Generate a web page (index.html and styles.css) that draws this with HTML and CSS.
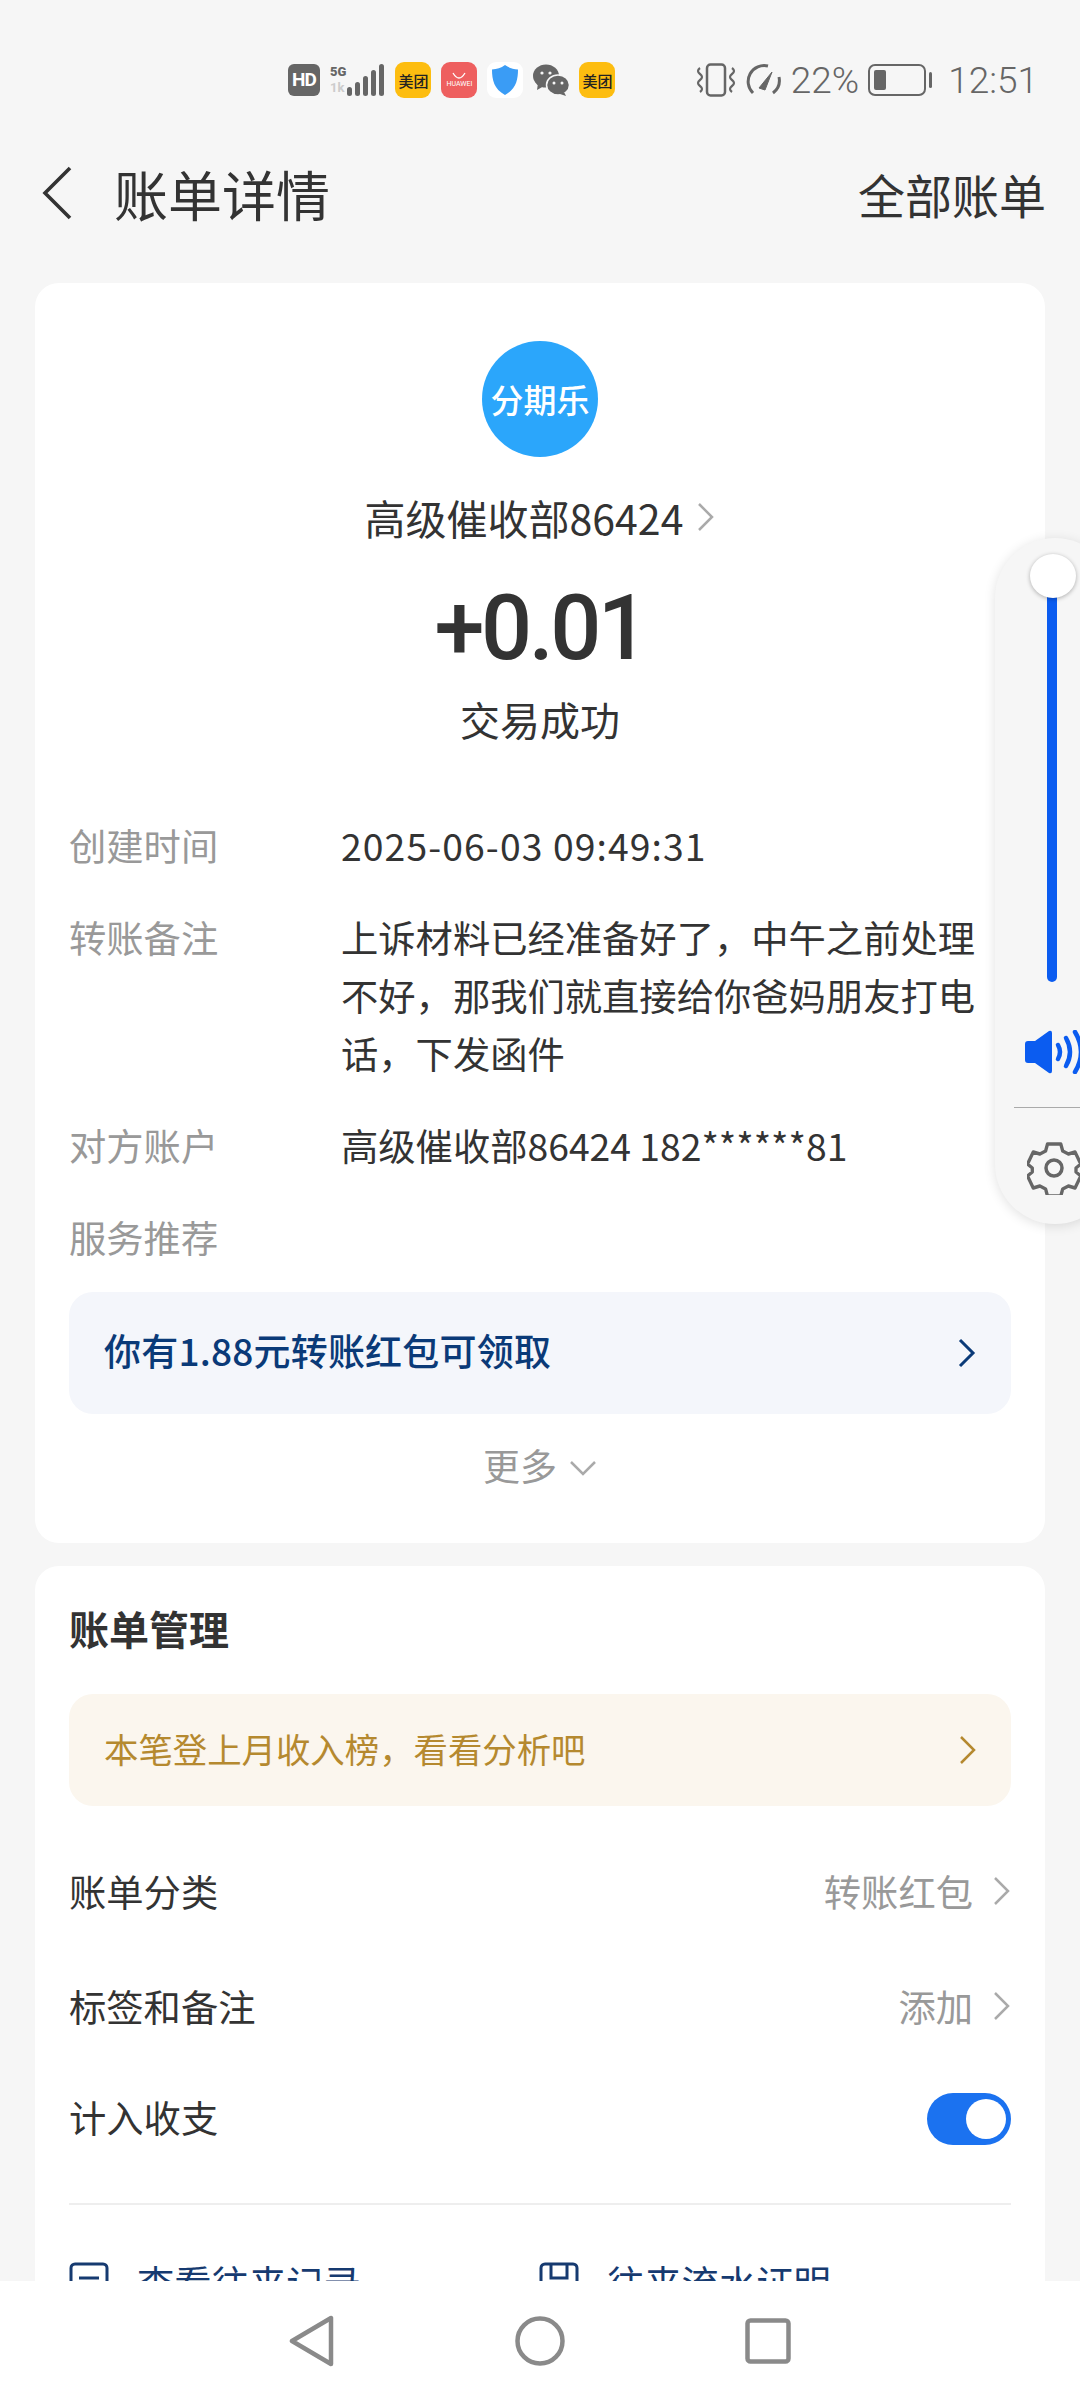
FILE: index.html
```html
<!DOCTYPE html>
<html lang="zh-CN">
<head>
  <meta charset="UTF-8" />
  <title>账单详情</title>
  <link rel="stylesheet" href="styles.css">
</head>
<body>
<div class="phone">
  <div class="statusbar">
    <div class="notify">
      <span class="hd">HD</span>
      <span class="net">
        <span class="net-label"><b>5G</b><i>1k</i></span>
        <svg width="38" height="32" viewBox="0 0 38 32"><g fill="#666"><rect x="0" y="23" width="5" height="9" rx="2.5"/><rect x="8" y="18" width="5" height="14" rx="2.5"/><rect x="16" y="12" width="5" height="20" rx="2.5"/><rect x="24" y="6" width="5" height="26" rx="2.5"/><rect x="32" y="0" width="5" height="32" rx="2.5"/></g></svg>
      </span>
      <span class="app meituan">美团</span>
      <span class="app huawei"><svg width="14" height="8" viewBox="0 0 14 8"><path d="M1 1q6 10 12 0" fill="none" stroke="#fff" stroke-width="1.3"/></svg><em>HUAWEI</em></span>
      <span class="app shield"><svg width="26" height="30" viewBox="0 0 26 30"><path d="M13 0C9 3 5 4 0 4.500C0 15 2 24 13 30C24 24 26 15 26 4.500C21 4 17 3 13 0Z" fill="#3a9cf5"/></svg></span>
      <svg class="wechat" width="36" height="32" viewBox="0 0 36 32"><ellipse cx="13" cy="12" rx="13" ry="11.500" fill="#666"/><path d="M5 19l-1 7 7-4z" fill="#666"/><ellipse cx="25" cy="21" rx="11.500" ry="10" fill="#666" stroke="#f6f6f6" stroke-width="1.500"/><path d="M31 28l2 4-6-2z" fill="#666"/><g fill="#f6f6f6"><circle cx="9" cy="9" r="1.600"/><circle cx="17" cy="9" r="1.600"/><circle cx="21" cy="19" r="1.500"/><circle cx="29" cy="19" r="1.500"/></g></svg>
      <span class="app meituan">美团</span>
    </div>
    <div class="system">
      <svg width="42" height="34" viewBox="0 0 42 34" fill="none" stroke="#666" stroke-width="2.500"><rect x="12" y="1.500" width="18" height="31" rx="3.500"/><path d="M4 5q-4 3 0 6t0 6 0 6 0 6" stroke-width="2.200" transform="translate(1 0)"/><path d="M37 5q4 3 0 6t0 6 0 6 0 6" stroke-width="2.200"/></svg>
      <svg width="38" height="34" viewBox="0 0 38 34" fill="none" stroke="#666" stroke-width="3"><path d="M9 30A16 16 0 0 1 24 3"/><path d="M29 30A16 16 0 0 0 35 14"/><path d="M15 25L28 9l-7 18z" fill="#666" stroke-width="1"/></svg>
      <span class="batt-text">22%</span>
      <span class="battery"><span class="battery-body"><span class="battery-fill"></span></span><span class="battery-tip"></span></span>
      <span class="clock">12:51</span>
    </div>
  </div>

  <header class="topbar">
    <div class="topbar-left">
      <svg width="34" height="54" viewBox="0 0 34 54" fill="none" stroke="#333" stroke-width="3.600"><path d="M30 2L5 27l25 25"/></svg>
      <h1>账单详情</h1>
    </div>
    <a class="topbar-link">全部账单</a>
  </header>

  <section class="card summary">
    <div class="logo">分期乐</div>
    <div class="payee">高级催收部86424 <svg class="chev" width="18" height="30" viewBox="0 0 18 30"><path d="M2 2l13 13L2 28"/></svg></div>
    <div class="amount">+0.01</div>
    <div class="state">交易成功</div>

    <dl class="details">
      <div class="row"><dt>创建时间</dt><dd class="date">2025-06-03 09:49:31</dd></div>
      <div class="row"><dt>转账备注</dt><dd>上诉材料已经准备好了，中午之前处理不好，那我们就直接给你爸妈朋友打电话，下发函件</dd></div>
      <div class="row"><dt>对方账户</dt><dd>高级催收部86424 182******81</dd></div>
      <div class="row"><dt>服务推荐</dt></div>
    </dl>

    <div class="promo">
      <span>你有1.88元转账红包可领取</span>
      <svg width="20" height="32" viewBox="0 0 20 32" fill="none" stroke="#0a3a78" stroke-width="3"><path d="M3 3l13 13L3 29"/></svg>
    </div>
    <div class="more">更多 <svg width="28" height="16" viewBox="0 0 28 16" fill="none" stroke="#aaa" stroke-width="2.500"><path d="M2 2l12 12L26 2"/></svg></div>
  </section>

  <section class="card manage">
    <h2>账单管理</h2>
    <div class="tip">
      <span>本笔登上月收入榜，看看分析吧</span>
      <svg width="18" height="30" viewBox="0 0 18 30" fill="none" stroke="#b5892f" stroke-width="2.500"><path d="M2 2l13 13L2 28"/></svg>
    </div>
    <div class="item">
      <span>账单分类</span>
      <span class="item-value">转账红包 <svg class="chev" width="18" height="30" viewBox="0 0 18 30"><path d="M2 2l13 13L2 28"/></svg></span>
    </div>
    <div class="item">
      <span>标签和备注</span>
      <span class="item-value">添加 <svg class="chev" width="18" height="30" viewBox="0 0 18 30"><path d="M2 2l13 13L2 28"/></svg></span>
    </div>
    <div class="item item-switch">
      <span>计入收支</span>
      <span class="switch"><span class="knob"></span></span>
    </div>
    <div class="links">
      <a class="link"><svg width="40" height="40" viewBox="0 0 40 40" fill="none" stroke="#163a70" stroke-width="3"><rect x="2" y="2" width="36" height="36" rx="4"/><path d="M10 16h20M10 25h20"/></svg>查看往来记录</a>
      <a class="link"><svg width="40" height="40" viewBox="0 0 40 40" fill="none" stroke="#163a70" stroke-width="3"><rect x="2" y="2" width="36" height="36" rx="4"/><path d="M12 2v14h16V2"/></svg>往来流水证明</a>
    </div>
  </section>

  <aside class="volume">
    <span class="thumb"></span>
    <span class="track"></span>
    <svg class="speaker" width="56" height="44" viewBox="0 0 56 44"><path d="M0 14q0-3 3-3h7L24 1q3-1 3 2v38q0 3-3 2L10 33H3q-3 0-3-3z" fill="#0b5cf0"/><g fill="none" stroke="#0b5cf0" stroke-width="4.500" stroke-linecap="round"><path d="M33 15q4 7 0 14"/><path d="M41 8q8 14 0 28"/><path d="M50 2q12 20 0 40"/></g></svg>
    <span class="volume-line"></span>
    <svg class="gear" width="54" height="54" viewBox="0 0 54 54" fill="none" stroke="#666" stroke-width="3.500" stroke-linejoin="round"><path d="M20 3h14l2 7 6 3 7-2 6 12-5 4v4l5 4-6 12-7-2-6 3-2 7H20l-2-7-6-3-7 2-6-12 5-4v-4l-5-4 6-12 7 2 6-3z" transform="translate(1.500 0) scale(.95 1)"/><circle cx="27" cy="27" r="8"/></svg>
  </aside>

  <nav class="navbar">
    <svg width="46" height="52" viewBox="0 0 46 52" fill="none" stroke="#8a8a8a" stroke-width="4.500" stroke-linejoin="round"><path d="M42 3v46L3 26z"/></svg>
    <svg width="50" height="50" viewBox="0 0 50 50" fill="none" stroke="#8a8a8a" stroke-width="4.500"><circle cx="25" cy="25" r="22.500"/></svg>
    <svg width="46" height="46" viewBox="0 0 46 46" fill="none" stroke="#8a8a8a" stroke-width="4.500"><rect x="2.500" y="2.500" width="41" height="41" rx="3"/></svg>
  </nav>
</div>
</body>
</html>
```

FILE: styles.css
```css
* {
  box-sizing: border-box;
}
body {
  margin: 0;
  font-family: "Noto Sans CJK SC", "Noto Sans", sans-serif;
  color: #333;
}
.phone {
  position: relative;
  width: 1080px;
  height: 2400px;
  overflow: hidden;
  background-color: #f6f6f6;
}

/* status bar */
.statusbar {
  height: 137px;
  padding: 23px 42px 0 288px;
  display: flex;
  justify-content: space-between;
  align-items: center;
  color: #666;
}
.notify, .system {
  display: flex;
  align-items: center;
}
.notify {
  gap: 10px;
}
.hd {
  width: 32px;
  height: 32px;
  border-radius: 6px;
  background-color: #666;
  color: white;
  font: bold 19px "Roboto", sans-serif;
  letter-spacing: -1px;
  text-align: center;
  line-height: 32px;
}
.net {
  display: flex;
  align-items: flex-end;
}
.net-label {
  display: flex;
  flex-direction: column;
  font: bold 13px/16px "Roboto", sans-serif;
  margin-right: 1px;
}
.net-label i {
  font-style: normal;
  color: #ccc;
}
.app {
  width: 36px;
  height: 36px;
  border-radius: 9px;
  display: flex;
  flex-direction: column;
  align-items: center;
  justify-content: center;
}
.meituan {
  background-color: #fdbd10;
  color: #222;
  font-size: 15px;
  font-weight: 500;
}
.huawei {
  background-color: #ee5f5f;
  color: white;
}
.huawei em {
  font: 7px "Roboto", sans-serif;
}
.shield {
  background-color: white;
}
.system {
  gap: 7px;
  font-family: "Roboto", sans-serif;
  font-size: 37px;
  font-weight: 300;
}
.batt-text {
  margin-left: 2px;
}
.battery {
  display: flex;
  align-items: center;
  gap: 3px;
  margin-left: 2px;
}
.battery-body {
  width: 58px;
  height: 32px;
  border: 2.500px solid #666;
  border-radius: 7px;
  padding: 4px;
  display: block;
}
.battery-fill {
  display: block;
  width: 12px;
  height: 100%;
  background-color: #666;
  border-radius: 2px;
}
.battery-tip {
  width: 3px;
  height: 16px;
  background-color: #666;
  border-radius: 2px;
}
.clock {
  margin-left: 9px;
}

/* top bar */
.topbar {
  height: 114px;
  padding: 0 34px 2px 40px;
  display: flex;
  justify-content: space-between;
  align-items: center;
}
.topbar-left {
  display: flex;
  align-items: center;
  gap: 40px;
}
.topbar h1 {
  margin: 0;
  font-size: 54px;
  font-weight: 400;
}
.topbar-link {
  font-size: 47px;
}

/* cards */
.card {
  margin: 0 35px;
  background-color: white;
  border-radius: 24px;
  padding: 0 34px;
}
.summary {
  margin-top: 32px;
  height: 1260px;
  padding-top: 58px;
  display: flex;
  flex-direction: column;
  align-items: center;
}
.logo {
  width: 116px;
  height: 116px;
  border-radius: 50%;
  background-color: #2ba6fb;
  color: white;
  font-size: 33px;
  font-weight: 500;
  line-height: 116px;
  text-align: center;
}
.payee {
  margin-top: 33px;
  font-size: 41px;
  line-height: 54px;
  display: flex;
  align-items: center;
  gap: 14px;
}
.chev {
  fill: none;
  stroke: #aaa;
  stroke-width: 2.500;
}
.amount {
  margin-top: 35px;
  font-family: "Roboto", sans-serif;
  font-size: 90px;
  font-weight: 500;
  line-height: 100px;
  letter-spacing: -3.500px;
}
.state {
  margin-top: 13px;
  font-size: 40px;
  line-height: 54px;
}
.details {
  width: 100%;
  margin: 70px 0 0;
}
.row {
  display: flex;
  margin-bottom: 34px;
  font-size: 37.300px;
  line-height: 58px;
}
.row dt {
  width: 272px;
  flex: none;
  color: #999;
}
.row dd {
  margin: 0;
  flex: 1;
  padding-right: 24px;
}
.row .date {
  letter-spacing: 1.100px;
}
.promo {
  width: 100%;
  height: 122px;
  margin-top: -8px;
  padding: 0 34px 0 35px;
  background-color: #f4f6fb;
  border-radius: 24px;
  display: flex;
  justify-content: space-between;
  align-items: center;
  color: #0a3a78;
  font-size: 37px;
  font-weight: 500;
  letter-spacing: 0.200px;
}
.promo span {
  margin-bottom: 6px;
}
.more {
  margin-top: 29px;
  font-size: 37px;
  line-height: 44px;
  color: #999;
  display: flex;
  align-items: center;
  gap: 12px;
}
.more svg {
  margin-top: 6px;
}
.manage {
  margin-top: 23px;
  height: 1000px;
}
.manage h2 {
  margin: 0;
  padding-top: 34px;
  font-size: 40px;
  font-weight: 700;
  line-height: 56px;
}
.tip {
  margin-top: 38px;
  height: 112px;
  padding: 0 34px 0 35px;
  background-color: #fbf6ee;
  border-radius: 24px;
  display: flex;
  justify-content: space-between;
  align-items: center;
  color: #b5892f;
  font-size: 34.400px;
}
.tip span {
  margin-bottom: 5px;
}
.item {
  height: 115px;
  display: flex;
  justify-content: space-between;
  align-items: center;
  font-size: 37.300px;
}
.tip + .item {
  margin-top: 27px;
}
.item-value {
  color: #999;
  display: flex;
  align-items: center;
  gap: 20px;
}
.item-switch {
  height: 108px;
}
.switch {
  width: 84px;
  height: 52px;
  margin-top: 4px;
  border-radius: 26px;
  background-color: #1b72f0;
  display: flex;
  justify-content: flex-end;
  align-items: center;
  padding-right: 5px;
}
.knob {
  width: 40px;
  height: 40px;
  border-radius: 50%;
  background-color: white;
}
.links {
  margin-top: 32px;
  padding-top: 50px;
  border-top: 2px solid #eeeeee;
  display: grid;
  grid-template-columns: 470px 1fr;
  color: #163a70;
}
.link {
  display: flex;
  align-items: center;
  gap: 28px;
  font-size: 37.300px;
}

/* overlays */
.volume {
  position: absolute;
  left: 995px;
  top: 538px;
  width: 120px;
  height: 686px;
  border-radius: 60px;
  background-color: #f6f6f6;
  box-shadow: 0 2px 12px rgba(0,0,0,0.12);
}
.thumb {
  position: absolute;
  left: 35px;
  top: 16px;
  width: 46px;
  height: 44px;
  border-radius: 50%;
  background-color: white;
  box-shadow: 0 1px 4px rgba(0,0,0,0.3);
  z-index: 1;
}
.track {
  position: absolute;
  left: 52px;
  top: 54px;
  width: 10px;
  height: 390px;
  background-color: #0b5cf0;
  border-radius: 5px;
}
.speaker {
  position: absolute;
  left: 30px;
  top: 492px;
}
.volume-line {
  position: absolute;
  left: 19px;
  top: 569px;
  width: 100px;
  height: 1px;
  background-color: #aaa;
}
.gear {
  position: absolute;
  left: 32px;
  top: 603px;
}
.navbar {
  position: absolute;
  left: 0;
  bottom: 0;
  width: 100%;
  height: 119px;
  background-color: white;
  display: flex;
  justify-content: center;
  align-items: center;
  gap: 180px;
}
```
